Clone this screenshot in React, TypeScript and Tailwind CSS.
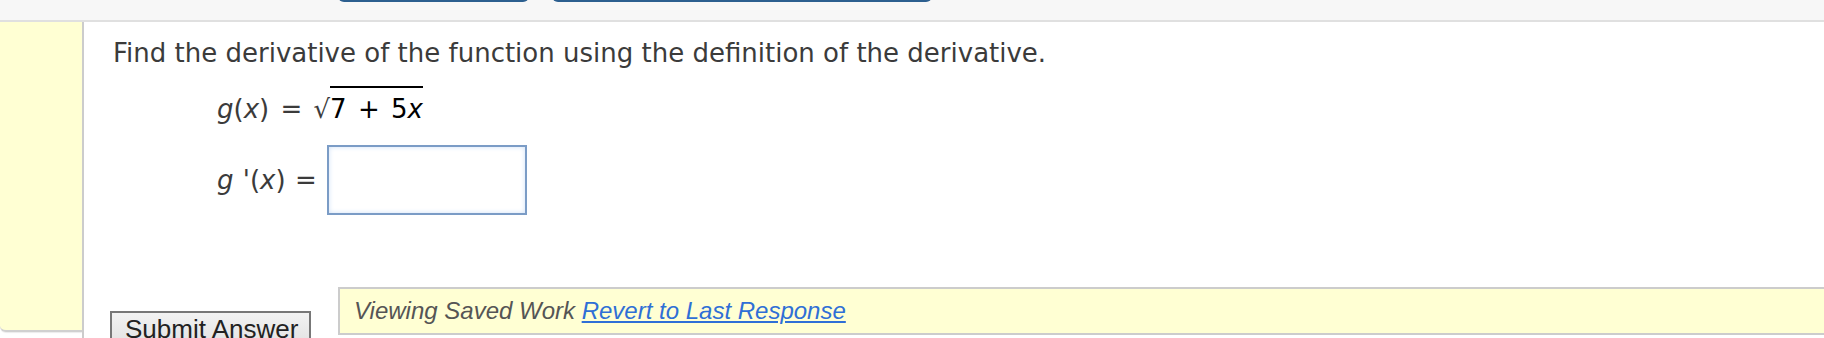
import React from 'react';

const verdana = { fontFamily: '"DejaVu Sans", Verdana, sans-serif' };

const App: React.FC = () => {
  return (
    <div className="h-[338px] w-[1824px] overflow-hidden bg-white">
      {/* top toolbar, only the bottoms of its buttons are in view */}
      <div className="flex h-[22px] gap-[23px] overflow-hidden border-b-2 border-[#e0e0e0] bg-[#f7f7f7] pl-[338px]">
        <div className="-mt-[38px] h-[40px] w-[191px] rounded-b-[6px] bg-[#2c5f8f]" />
        <div className="-mt-[38px] h-[40px] w-[380px] rounded-b-[6px] bg-[#2c5f8f]" />
      </div>

      <div className="flex">
        <div className="h-[310px] w-[82px] shrink-0 rounded-bl-[6px] border-b-2 border-[#d0d0d0] bg-[#ffffd3] shadow-[0_1px_1px_rgba(0,0,0,0.08)]" />

        <div className="flex-1 border-l-2 border-[#cccccc] pt-[16px]">
          <div className="pl-[29px] text-[26px] leading-[30px] text-[#3b3b3b]" style={verdana}>
            <p>Find the derivative of the function using the definition of the derivative.</p>

            <p className="mt-[26px] pl-[104px] [word-spacing:3px]">
              <i>g</i>(<i>x</i>) = √
              <span className="-mt-[8px] inline-block border-t-2 border-black pt-[6px] leading-[30px] text-black">
                7 + 5<i>x</i>
              </span>
            </p>

            <div className="mt-[21px] flex items-center gap-[10px] pl-[104px]">
              <span className="[word-spacing:1px]">
                <i>g</i> '(<i>x</i>) =
              </span>
              <input
                type="text"
                className="h-[70px] w-[200px] border-2 border-[#7b9cc6] bg-white shadow-[inset_0_0_5px_#cfe0f7] outline-none"
              />
            </div>
          </div>

          <div className="mt-[72px] flex items-start" style={{ fontFamily: '"Liberation Sans", Arial, sans-serif' }}>
            <button
              type="button"
              className="ml-[26px] mt-[24px] h-[50px] w-[201px] shrink-0 border-2 border-[#777777] bg-gradient-to-b from-[#f2f2f2] to-[#dcdcdc] pb-[14px] pl-[13px] text-left text-[26px] leading-[30px] text-[#222222]"
            >
              Submit Answer
            </button>
            <div className="ml-[27px] flex-1 border-y-2 border-l-2 border-[#cccccc] bg-[#ffffd3] py-[7px] pl-[14px] text-[24px] italic leading-[30px] text-[#555555]">
              Viewing Saved Work{' '}
              <a href="#" className="text-[#2f6fd6] underline">
                Revert to Last Response
              </a>
            </div>
          </div>
        </div>
      </div>
    </div>
  );
};

export default App;
